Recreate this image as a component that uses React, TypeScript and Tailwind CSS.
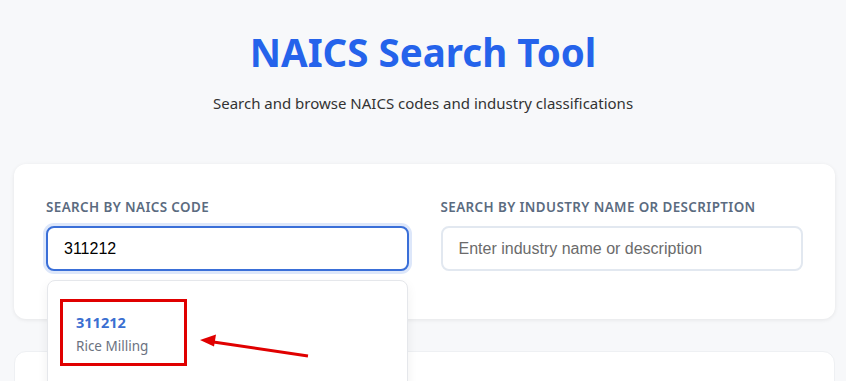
import React from "react";

const SearchField: React.FC<{
  label: string;
  value?: string;
  placeholder?: string;
  focused?: boolean;
  children?: React.ReactNode;
}> = ({ label, value, placeholder, focused, children }) => (
  <div className="relative flex flex-col">
    <label className="mb-[10px] text-[13.4px] font-semibold uppercase tracking-[0.03em] text-[#5b6b80] leading-[18px]">
      {label}
    </label>
    <input
      readOnly
      value={value}
      placeholder={placeholder}
      className={
        focused
          ? "h-[45px] w-full rounded-lg border-2 border-[#3a6fd8] bg-white px-4 text-[16px] text-black outline-none shadow-[0_0_0_3px_#dde7fa] font-['Liberation_Sans',Arial,sans-serif]"
          : "h-[45px] w-full rounded-lg border-2 border-[#e2e8f0] bg-white px-4 text-[16px] text-black outline-none placeholder:text-[#6b6b6b] font-['Liberation_Sans',Arial,sans-serif]"
      }
    />
    {children}
  </div>
);

export default function App() {
  return (
    <div className="h-screen overflow-hidden bg-[#f7f8fa] font-['Noto_Sans','Open_Sans',sans-serif]">
      <header className="pt-[27px] text-center">
        <h1 className="text-[38.5px] font-bold leading-[50px] text-[#2563eb]">
          NAICS Search Tool
        </h1>
        <p className="mt-[16px] text-[15px] leading-[20px] text-[#333]">
          Search and browse NAICS codes and industry classifications
        </p>
      </header>

      <main className="ml-[14px] mr-[11px] mt-[51px] flex flex-col gap-[32px]">
        <section className="relative z-10 rounded-xl bg-white px-[32px] pt-[34px] pb-[48px] shadow-[0_1px_4px_rgba(0,0,0,0.08)]">
          <div className="grid grid-cols-2 gap-[32px]">
            <SearchField label="Search by NAICS Code" value="311212" focused>
              <div className="absolute left-px right-px top-[82px] h-[120px] rounded-lg border border-[#e5e7eb] bg-white shadow-[0_4px_12px_rgba(0,0,0,0.06)]">
                <div className="px-[28px] pt-[31px]">
                  <div className="text-[14.5px] font-bold leading-[20px] text-[#3b6fd1]">
                    311212
                  </div>
                  <div className="mt-[5px] text-[13.5px] leading-[18px] text-[#6b7280]">
                    Rice Milling
                  </div>
                </div>
                {/* annotation box */}
                <div className="absolute left-[12px] top-[18px] h-[67px] w-[127px] border-[3px] border-[#e00000]" />
              </div>
              {/* annotation arrow */}
              <svg
                className="absolute left-[140px] top-[128px] h-[40px] w-[130px]"
                viewBox="0 0 130 40"
              >
                <line x1="122" y1="30" x2="24" y2="15.5" stroke="#e00000" strokeWidth="3" />
                <polygon points="14,14 30,8.5 28,20.5" fill="#e00000" />
              </svg>
            </SearchField>
            <SearchField
              label="Search by Industry Name or Description"
              placeholder="Enter industry name or description"
            />
          </div>
        </section>
        <section className="h-[120px] rounded-xl border border-[#eef0f3] bg-white" />
      </main>
    </div>
  );
}
